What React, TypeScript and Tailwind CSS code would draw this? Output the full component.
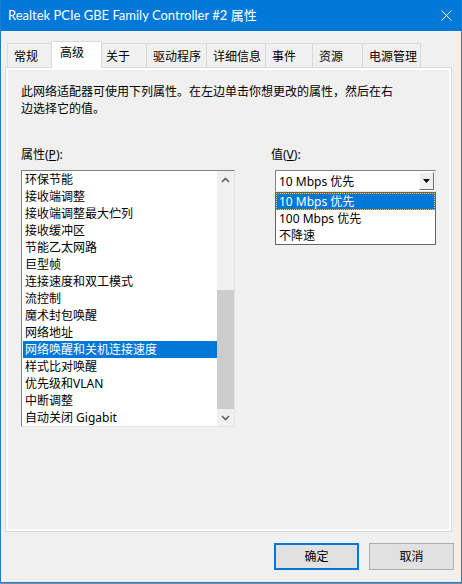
const font = "font-['Noto_Sans','Noto_Sans_CJK_SC',sans-serif]";

const tabs = [
  { label: '常规', w: 'w-[46px]' },
  { label: '高级', w: 'w-[51px]', active: true },
  { label: '关于', w: 'w-[47px]' },
  { label: '驱动程序', w: 'w-[60px]' },
  { label: '详细信息', w: 'w-[59px]' },
  { label: '事件', w: 'w-[47px]' },
  { label: '资源', w: 'w-[50px]' },
  { label: '电源管理', w: 'w-[58px]' },
];

const props = [
  '环保节能',
  '接收端调整',
  '接收端调整最大伫列',
  '接收缓冲区',
  '节能乙太网路',
  '巨型帧',
  '连接速度和双工模式',
  '流控制',
  '魔术封包唤醒',
  '网络地址',
  '网络唤醒和关机连接速度',
  '样式比对唤醒',
  '优先级和VLAN',
  '中断调整',
  '自动关闭 Gigabit',
];

const options = ['10 Mbps 优先', '100 Mbps 优先', '不降速'];

function Chevron({ down }: { down?: boolean }) {
  return (
    <svg width="9" height="6" viewBox="0 0 9 6" className={down ? 'rotate-180' : ''}>
      <path d="M1 5 L4.5 1.5 L8 5" fill="none" stroke="#606060" strokeWidth="1.6" />
    </svg>
  );
}

function Tab({ label, w, active }: { label: string; w: string; active?: boolean }) {
  if (active) {
    return (
      <div
        className={`${w} h-[27px] -mx-[2px] relative z-10 bg-white border border-b-0 border-[#d9d9d9] pl-[8px] pt-[1px] text-[12px] leading-[20px] text-black`}
      >
        {label}
      </div>
    );
  }
  return (
    <div
      className={`${w} h-[24px] mt-[2px] border border-b-0 border-l-0 first:border-l border-[#d9d9d9] bg-[#f0f0f0] pl-[6px] pt-[3px] text-[12px] leading-[20px] text-black`}
    >
      {label}
    </div>
  );
}

export default function App() {
  return (
    <div className={`${font} w-[462px] h-[584px] bg-[#8c8c8c] overflow-hidden`}>
      <div className="w-[462px] h-[583px] bg-[#f0f0f0] border-x border-b border-[#1a7fd9] flex flex-col">
        {/* Title bar */}
        <div className="h-[31px] bg-[#0078d7] flex items-center justify-between pl-[7px] pr-[9px] text-white">
          <span className="font-['Lato','Noto_Sans_CJK_SC',sans-serif] text-[13px] leading-none">
            Realtek PCIe GBE Family Controller #2 属性
          </span>
          <svg width="11" height="11" viewBox="0 0 11 11">
            <path d="M0.5 0.5 L10.5 10.5 M10.5 0.5 L0.5 10.5" stroke="#fff" strokeWidth="1" />
          </svg>
        </div>

        {/* Tabs */}
        <div className="flex pl-[6px] mt-[10px] items-start h-[26px]">
          {tabs.map((t) => (
            <Tab key={t.label} {...t} />
          ))}
        </div>

        {/* Panel */}
        <div className="ml-[4px] w-[447px] h-[465px] border border-[#d9d9d9]">
          <div className="h-full border-2 border-white bg-[#f0f0f0] px-[13px] pt-[13px] text-[12px] text-black relative">
            <p className="leading-[17px]">
              此网络适配器可使用下列属性。在左边单击你想更改的属性，然后在右
              <br />
              边选择它的值。
            </p>

            <div className="flex mt-[29px]">
              {/* Left column */}
              <div className="w-[216px]">
                <div className="leading-[17px] h-[17px]">
                  属性(<span className="underline">P</span>):
                </div>
                <div className="mt-[7px] h-[257px] flex border border-t-[#828282] border-l-[#828282] border-r-[#e3e3e3] border-b-[#e3e3e3] bg-white">
                  <div className="flex-1 pl-[1px]">
                    {props.map((p, i) => (
                      <div
                        key={p}
                        className={`h-[17px] leading-[17px] pl-[2px] whitespace-nowrap ${
                          i === 10 ? 'bg-[#0078d7] text-white' : ''
                        }`}
                      >
                        {p}
                      </div>
                    ))}
                  </div>
                  <div className="w-[17px] bg-[#f0f0f0] flex flex-col">
                    <div className="h-[17px] flex items-center justify-center">
                      <Chevron />
                    </div>
                    <div className="flex-1 flex flex-col justify-end">
                      <div className="h-[119px] bg-[#cdcdcd]" />
                    </div>
                    <div className="h-[17px] flex items-center justify-center">
                      <Chevron down />
                    </div>
                  </div>
                </div>
              </div>

              {/* Right column */}
              <div className="ml-[36px] w-[165px]">
                <div className="leading-[17px] h-[17px]">
                  值(<span className="underline">V</span>):
                </div>
                <div className="relative mt-[7px] ml-[4px] w-[161px]">
                  <div className="h-[22px] flex items-center bg-white border border-t-[#828282] border-l-[#828282] border-r-[#e3e3e3] border-b-[#e3e3e3]">
                    <span className="flex-1 pl-[3px] leading-[17px]">10 Mbps 优先</span>
                    <div className="w-[15px] h-[18px] mr-[1px] bg-[#f0f0f0] border border-t-white border-l-white border-r-[#696969] border-b-[#696969] flex items-center justify-center">
                      <svg width="7" height="4" viewBox="0 0 7 4">
                        <path d="M0 0 H7 L3.5 4 Z" fill="#000" />
                      </svg>
                    </div>
                  </div>
                  <div className="absolute left-0 top-[22px] w-[161px] bg-white border border-[#646464]">
                    {options.map((o, i) => (
                      <div
                        key={o}
                        className={`h-[17px] leading-[15px] pl-[2px] border ${
                          i === 0
                            ? 'bg-[#0078d7] text-white border-dotted border-[#f2c46b]'
                            : 'border-transparent'
                        }`}
                      >
                        {o}
                      </div>
                    ))}
                  </div>
                </div>
              </div>
            </div>
          </div>
        </div>

        {/* Buttons */}
        <div className="flex justify-end gap-[10px] pr-[7px] mt-[11px]">
          <button className="w-[85px] h-[27px] bg-[#e1e1e1] border-2 border-[#0078d7] text-[12px] text-black">
            确定
          </button>
          <button className="w-[85px] h-[27px] bg-[#e1e1e1] border border-[#adadad] text-[12px] text-black">
            取消
          </button>
        </div>
      </div>
    </div>
  );
}
